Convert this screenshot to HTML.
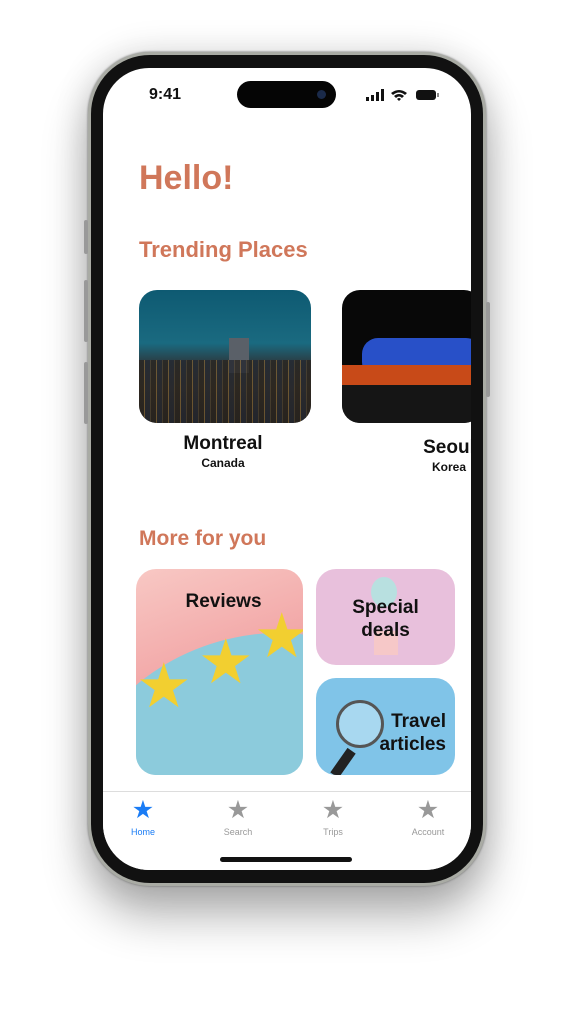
<!DOCTYPE html>
<html><head><style>
*{margin:0;padding:0;box-sizing:border-box}
body{width:572px;height:1025px;background:#fff;position:relative;overflow:hidden;font-family:"Liberation Sans",sans-serif}
.abs{position:absolute}
.phone{left:88px;top:52px;width:398px;height:834px;border-radius:62px;background:#111;border:3px solid #a9aba4;box-shadow:0 0 2px #666,0 30px 45px rgba(0,0,0,.3),0 0 35px rgba(0,0,0,.14)}
.screen{left:103px;top:68px;width:368px;height:802px;border-radius:46px;background:#fff;overflow:hidden}
.o{color:#d0775a;font-weight:bold}
.t{color:#111;font-weight:bold;text-align:center}
.tab{font-size:9px;text-align:center;width:80px}
</style></head><body>
<div class="abs phone"></div>
<div class="abs" style="left:84px;top:220px;width:4px;height:34px;background:#999;border-radius:2px"></div>
<div class="abs" style="left:84px;top:280px;width:4px;height:62px;background:#999;border-radius:2px"></div>
<div class="abs" style="left:84px;top:362px;width:4px;height:62px;background:#999;border-radius:2px"></div>
<div class="abs" style="left:486px;top:302px;width:4px;height:95px;background:#999;border-radius:2px"></div>
<div class="abs screen">
 <div class="abs" style="left:46px;top:18px;font-size:16px;font-weight:bold;color:#111">9:41</div>
 <div class="abs" style="left:134px;top:13px;width:99px;height:27px;border-radius:14px;background:#050505"></div>
 <div class="abs" style="left:214px;top:22px;width:9px;height:9px;border-radius:50%;background:#1a2a4a"></div>
 <svg class="abs" style="left:263px;top:21px" width="80" height="14">
  <rect x="0" y="8" width="3" height="4" fill="#111"/><rect x="5" y="6" width="3" height="6" fill="#111"/><rect x="10" y="3" width="3" height="9" fill="#111"/><rect x="15" y="0" width="3" height="12" fill="#111"/>
  <path d="M25 4 Q33 -2 41 4 L39 6 Q33 1 27 6Z M28 7 Q33 3 38 7 L36 9 Q33 6 30 9Z M31 10 L33 12 L35 10 Q33 8 31 10Z" fill="#111"/>
  <rect x="50" y="1" width="20" height="10" rx="3" fill="#111"/><rect x="71" y="4" width="2" height="4" fill="#888"/>
 </svg>
 <div class="abs o" style="left:36px;top:91px;font-size:34px">Hello!</div>
 <div class="abs o" style="left:36px;top:169px;font-size:22px">Trending Places</div>
 <div class="abs" style="left:36px;top:222px;width:172px;height:133px;border-radius:18px;overflow:hidden;background:linear-gradient(180deg,#0e5a72 0%,#1a6a80 40%,#2b3a40 55%,#3a3020 75%,#1a1a18 100%)">
  <div class="abs" style="left:90px;top:48px;width:20px;height:35px;background:#5a6068"></div>
  <div class="abs" style="left:0;top:70px;width:172px;height:63px;background:repeating-linear-gradient(90deg,#2a2520 0 5px,#7a6035 5px 6px,#252830 6px 11px,#4a4030 11px 12px);opacity:.8"></div>
 </div>
 <div class="abs" style="left:239px;top:222px;width:140px;height:133px;border-radius:18px;overflow:hidden;background:#080808">
  <div class="abs" style="left:20px;top:48px;width:120px;height:40px;background:#2850c8;border-radius:16px"></div>
  <div class="abs" style="left:0;top:75px;width:140px;height:20px;background:#c84a18"></div>
  <div class="abs" style="left:0;top:95px;width:140px;height:38px;background:#151515"></div>
 </div>
 <div class="abs t" style="left:60px;top:365px;width:120px;font-size:19px">Montreal</div>
 <div class="abs t" style="left:60px;top:388px;width:120px;font-size:12px">Canada</div>
 <div class="abs t" style="left:286px;top:369px;width:120px;font-size:19px">Seoul</div>
 <div class="abs t" style="left:286px;top:392px;width:120px;font-size:12px">Korea</div>
 <div class="abs o" style="left:36px;top:459px;font-size:21px">More for you</div>
 <div class="abs" style="left:33px;top:501px;width:167px;height:206px;border-radius:20px;overflow:hidden;background:linear-gradient(160deg,#f8c8c4 0%,#f2a8a8 45%,#8cc8da 55%,#98cfe0 100%)">
  <div class="abs" style="left:-60px;top:70px;width:340px;height:250px;border-radius:50%;background:#8ccbdc;transform:rotate(-20deg)"></div>
  <div class="abs" style="left:0px;top:80px;font-size:62px;color:#f2cf30">★</div>
  <div class="abs" style="left:62px;top:56px;font-size:62px;color:#f2cf30">★</div>
  <div class="abs" style="left:118px;top:30px;font-size:62px;color:#f2cf30">★</div>
  <div class="abs t" style="left:0;top:22px;width:175px;font-size:19px">Reviews</div>
 </div>
 <div class="abs" style="left:213px;top:501px;width:139px;height:96px;border-radius:20px;overflow:hidden;background:#e8c0dc">
  <div class="abs" style="left:55px;top:8px;width:26px;height:30px;border-radius:50%;background:#b8e0e0"></div>
  <div class="abs" style="left:58px;top:62px;width:24px;height:24px;background:#f6c8c8"></div>
  <div class="abs t" style="left:0;top:27px;width:139px;font-size:19px;line-height:23px">Special<br>deals</div>
 </div>
 <div class="abs" style="left:213px;top:610px;width:139px;height:97px;border-radius:20px;overflow:hidden;background:#80c4e8">
  <div class="abs" style="left:20px;top:22px;width:48px;height:48px;border-radius:50%;border:3px solid #555;background:#a8d8f0"></div>
  <div class="abs" style="left:22px;top:70px;width:10px;height:30px;background:#222;transform:rotate(35deg)"></div>
  <div class="abs t" style="left:50px;top:32px;width:90px;font-size:19px;line-height:23px;text-align:right;padding-right:10px">Travel<br>articles</div>
 </div>
 <div class="abs" style="left:0;top:723px;width:368px;height:1px;background:#ddd"></div>
 <div class="abs" style="left:0;top:724px;width:368px;height:80px;background:#fff"></div>
 <div class="abs tab" style="left:0;top:727px;color:#1a7cf5"><div style="font-size:25px">★</div><div style="margin-top:2px">Home</div></div>
 <div class="abs tab" style="left:95px;top:727px;color:#999"><div style="font-size:25px;color:#999">★</div><div style="margin-top:2px">Search</div></div>
 <div class="abs tab" style="left:190px;top:727px;color:#999"><div style="font-size:25px">★</div><div style="margin-top:2px">Trips</div></div>
 <div class="abs tab" style="left:285px;top:727px;color:#999"><div style="font-size:25px">★</div><div style="margin-top:2px">Account</div></div>
 <div class="abs" style="left:117px;top:789px;width:132px;height:5px;border-radius:3px;background:#111"></div>
</div>
</body></html>
